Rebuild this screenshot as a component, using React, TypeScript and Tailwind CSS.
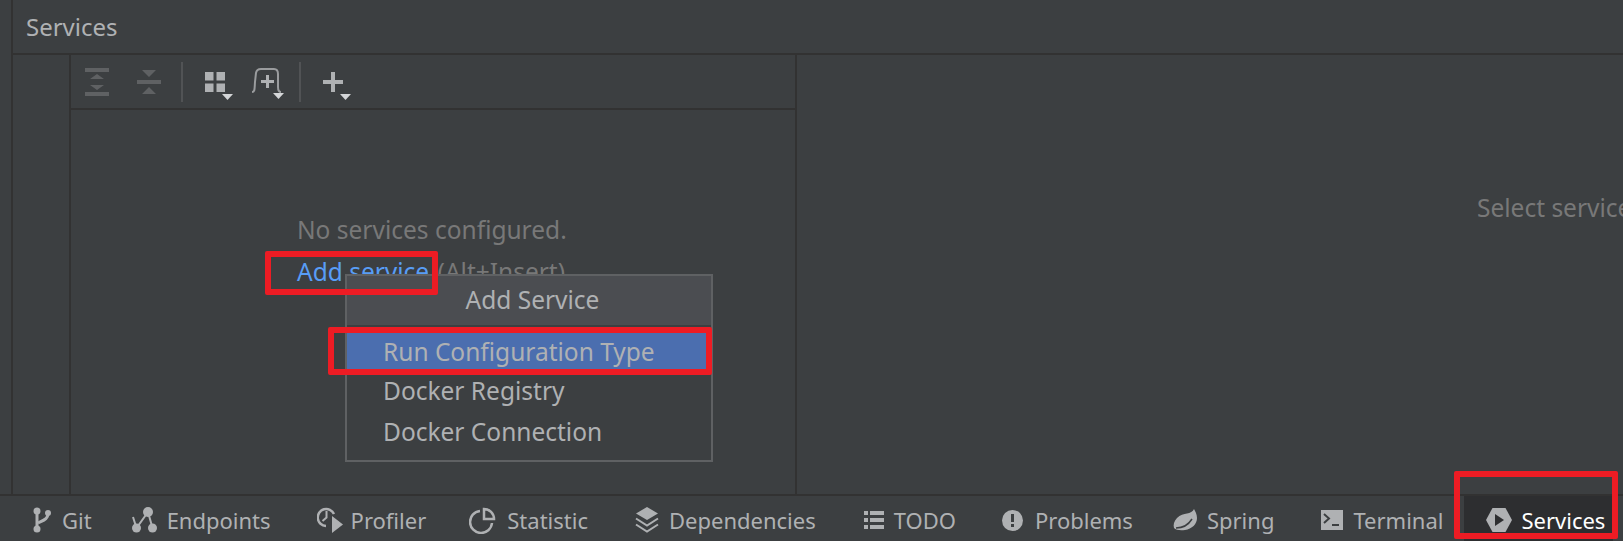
import React from 'react';

const Caret = ({ x, y }: { x: number; y: number }) => <path d={`M${x} ${y}h11l-5.5 6z`} fill="#d4d6d8" />;

const ExpandIcon = () => (
  <svg width="24" height="28" viewBox="0 0 24 28" fill="#5f6163" className="shrink-0">
    <path d="M0 0h24v4H0zM0 24h24v4H0zM12 6l7 5H5zM12 22l-7-5h14z" />
  </svg>
);

const CollapseIcon = () => (
  <svg width="24" height="24" viewBox="0 0 24 24" fill="#5f6163" className="shrink-0">
    <path d="M0 10h24v4H0zM5 0h14l-7 7zM12 17l7 7H5z" />
  </svg>
);

const GridIcon = () => (
  <svg width="28" height="28" viewBox="0 0 28 28" fill="#afb1b3" className="shrink-0">
    <path d="M0 0h8.500v8.500H0zM11.500 0H20v8.500h-8.500zM0 11.500h8.500V20H0zM11.500 11.500H20V20h-8.500z" />
    <Caret x={17} y={22} />
  </svg>
);

const AddTabIcon = () => (
  <svg width="33" height="32" viewBox="0 0 33 32" fill="none" className="shrink-0">
    <path d="M1 25c3 0 2.500-3 3-10l1-9c.5-3 2-4 5-4h13c3 0 4 2 4 5v13c0 3 1 5 3 5" stroke="#9a9c9e" strokeWidth="2" />
    <path d="M15 8h3v5h5v3h-5v5h-3v-5h-5v-3h5z" fill="#afb1b3" />
    <Caret x={22} y={26} />
  </svg>
);

const PlusIcon = () => (
  <svg width="30" height="28" viewBox="0 0 30 28" fill="#afb1b3" className="shrink-0">
    <path d="M8 0h4v8h8v4h-8v8H8v-8H0V8h8z" />
    <Caret x={17} y={22} />
  </svg>
);

const GitIcon = () => (
  <svg width="18" height="26" viewBox="0 0 18 26" fill="#afb1b3">
    <circle cx="4" cy="4" r="3.500" />
    <circle cx="4" cy="22" r="3.500" />
    <circle cx="15" cy="6" r="3" />
    <path d="M2.500 4h3v18h-3z" />
    <path d="M15 6c0 6-4 7-10 10" fill="none" stroke="#afb1b3" strokeWidth="3" />
  </svg>
);

const EndpointsIcon = () => (
  <svg width="26" height="26" viewBox="0 0 26 26" fill="#afb1b3">
    <circle cx="16" cy="5" r="5" />
    <circle cx="4.500" cy="21" r="4.500" />
    <circle cx="20.500" cy="21" r="4.500" />
    <path d="M1 10l3.500 11L16 5l4.500 16" fill="none" stroke="#afb1b3" strokeWidth="2" />
  </svg>
);

const ProfilerIcon = () => (
  <svg width="26" height="27" viewBox="0 0 26 27" fill="none">
    <path d="M9 19a8.500 8.500 0 1 1 8-12" stroke="#afb1b3" strokeWidth="2.500" />
    <path d="M9.500 4v6.500L5.500 14" stroke="#afb1b3" strokeWidth="2" />
    <path d="M15 9l11 8.500L15 26z" fill="#afb1b3" />
  </svg>
);

const StatisticIcon = () => (
  <svg width="27" height="27" viewBox="0 0 27 27" fill="none" stroke="#afb1b3" strokeWidth="2.500">
    <path d="M11 4a11 11 0 1 0 12 12" />
    <path d="M15 2a10 10 0 0 1 10 10H15z" />
  </svg>
);

const DependenciesIcon = () => (
  <svg width="24" height="26" viewBox="0 0 24 26" fill="none" stroke="#afb1b3" strokeWidth="2">
    <path d="M12 0l11 6.500L12 13 1 6.500z" fill="#afb1b3" stroke="none" />
    <path d="M1 11.500l11 7 11-7M1 17.500l11 7 11-7" />
  </svg>
);

const TodoIcon = () => (
  <svg width="20" height="18" viewBox="0 0 20 18" fill="#afb1b3">
    <path d="M0 0h4v4H0zM6 0h14v4H6zM0 7h4v4H0zM6 7h14v4H6zM0 14h4v4H0zM6 14h14v4H6z" />
  </svg>
);

const ProblemsIcon = () => (
  <svg width="21" height="21" viewBox="0 0 21 21">
    <circle cx="10.500" cy="10.500" r="10.500" fill="#afb1b3" />
    <path d="M9 4h3v8H9zM9 14h3v3H9z" fill="#3c3f41" />
  </svg>
);

const SpringIcon = () => (
  <svg width="24" height="22" viewBox="0 0 24 22">
    <path d="M21 0c1 2 3 5 3 9 0 6-5 11-12 12-5 .7-9 0-11-2-1-3 0-7 3-10 3-3 7-4 10-4.500 3-.5 6-2 7-4.500z" fill="#afb1b3" />
    <path d="M3 19c4 0 11-1 16-9" fill="none" stroke="#3c3f41" strokeWidth="1.500" />
  </svg>
);

const TerminalIcon = () => (
  <svg width="22" height="20" viewBox="0 0 22 20">
    <path d="M0 0h22v20H0z" fill="#afb1b3" />
    <path d="M3 4l5 4.500L3 13" fill="none" stroke="#3c3f41" strokeWidth="2" />
    <path d="M11 14h7v2h-7z" fill="#3c3f41" />
  </svg>
);

const ServicesIcon = () => (
  <svg width="26" height="24" viewBox="0 0 26 24">
    <path d="M6.500 0h13L26 12l-6.500 12h-13L0 12z" fill="#afb1b3" />
    <path d="M9 6l9 6-9 6z" fill="#2d2e30" />
  </svg>
);

const tools = [
  { label: 'Git', icon: <GitIcon />, cls: 'ml-[33px] gap-[11px]' },
  { label: 'Endpoints', icon: <EndpointsIcon />, cls: 'ml-[40px] gap-[9px]' },
  { label: 'Profiler', icon: <ProfilerIcon />, cls: 'ml-[46px] gap-[8px]' },
  { label: 'Statistic', icon: <StatisticIcon />, cls: 'ml-[43px] gap-[11px]' },
  { label: 'Dependencies', icon: <DependenciesIcon />, cls: 'ml-[47px] gap-[10px]' },
  { label: 'TODO', icon: <TodoIcon />, cls: 'ml-[48px] gap-[10px]' },
  { label: 'Problems', icon: <ProblemsIcon />, cls: 'ml-[46px] gap-[12px]' },
  { label: 'Spring', icon: <SpringIcon />, cls: 'ml-[40px] gap-[10px]' },
  { label: 'Terminal', icon: <TerminalIcon />, cls: 'ml-[47px] gap-[10px]' },
];

export default function App() {
  return (
    <div className="relative flex h-[541px] w-[1623px] flex-col overflow-hidden bg-[#3c3f41] font-['Noto_Sans',sans-serif] text-[#afb1b3]">
      <div className="flex min-h-0 flex-1">
        <div className="w-[13px] shrink-0 border-r-2 border-[#323232]" />
        <div className="flex min-w-0 flex-1 flex-col">
          <div className="flex h-[55px] shrink-0 items-center border-b-2 border-[#323232] pl-[13px] text-[24px]">Services</div>
          <div className="flex min-h-0 flex-1">
            <div className="w-[58px] shrink-0 border-r-2 border-[#323232]" />
            <div className="flex w-[726px] shrink-0 flex-col border-r-2 border-[#323232]">
              <div className="flex h-[55px] shrink-0 items-center border-b-2 border-[#323232]">
                <div className="ml-[14px]"><ExpandIcon /></div>
                <div className="ml-[28px]"><CollapseIcon /></div>
                <div className="ml-[20px] h-[40px] w-[2px] bg-[#515355]" />
                <div className="ml-[22px] mt-[8px]"><GridIcon /></div>
                <div className="ml-[18px] mt-[2px]"><AddTabIcon /></div>
                <div className="ml-[15px] h-[40px] w-[2px] bg-[#515355]" />
                <div className="ml-[22px] mt-[8px]"><PlusIcon /></div>
              </div>
              <div className="pl-[226px] pt-[99px] text-[24.500px] leading-[42px]">
                <div className="text-[#787878]">No services configured.</div>
                <div className="text-[#787878]"><span className="mr-[2px] text-[#589df6]">Add service</span> (Alt+Insert)</div>
              </div>
            </div>
            <div className="flex-1 overflow-hidden whitespace-nowrap pl-[680px] pt-[132px] text-[24.500px] leading-[42px] text-[#787878]">Select service to view details</div>
          </div>
        </div>
      </div>

      <div className="flex h-[47px] shrink-0 items-center border-t-2 border-[#323232] text-[22px]">
        {tools.map((t) => (
          <div key={t.label} className={`flex items-center pt-[3px] ${t.cls}`}>
            {t.icon}
            <span>{t.label}</span>
          </div>
        ))}
        <div className="ml-[21px] flex h-full w-[149px] items-center gap-[9px] bg-[#2d2e30] pl-[22px] pt-[3px] text-white">
          <ServicesIcon />
          <span>Services</span>
        </div>
      </div>

      <div className="absolute left-[345px] top-[274px] flex h-[188px] w-[368px] flex-col border-2 border-[#5f6163] bg-[#3c3f41] text-[24.500px]">
        <div className="flex h-[49px] items-center justify-center bg-[#4b4d51] pl-[7px]">Add Service</div>
        <div className="mt-[8px] flex h-[37px] items-center bg-[#4b6eaf] pl-[36px] pt-[1px]">Run Configuration Type</div>
        <div className="flex h-[41px] items-center pl-[36px] pt-[2px]">Docker Registry</div>
        <div className="flex h-[40px] items-center pl-[36px] pt-[2px]">Docker Connection</div>
      </div>

      <div className="absolute left-[265px] top-[251px] h-[44px] w-[173px] rounded-[2px] border-[6px] border-[#ed1c24]" />
      <div className="absolute left-[328px] top-[327px] h-[48px] w-[384px] rounded-[2px] border-[6px] border-[#ed1c24]" />
      <div className="absolute left-[1454px] top-[471px] h-[68px] w-[164px] rounded-[2px] border-[6px] border-[#ed1c24]" />
    </div>
  );
}
